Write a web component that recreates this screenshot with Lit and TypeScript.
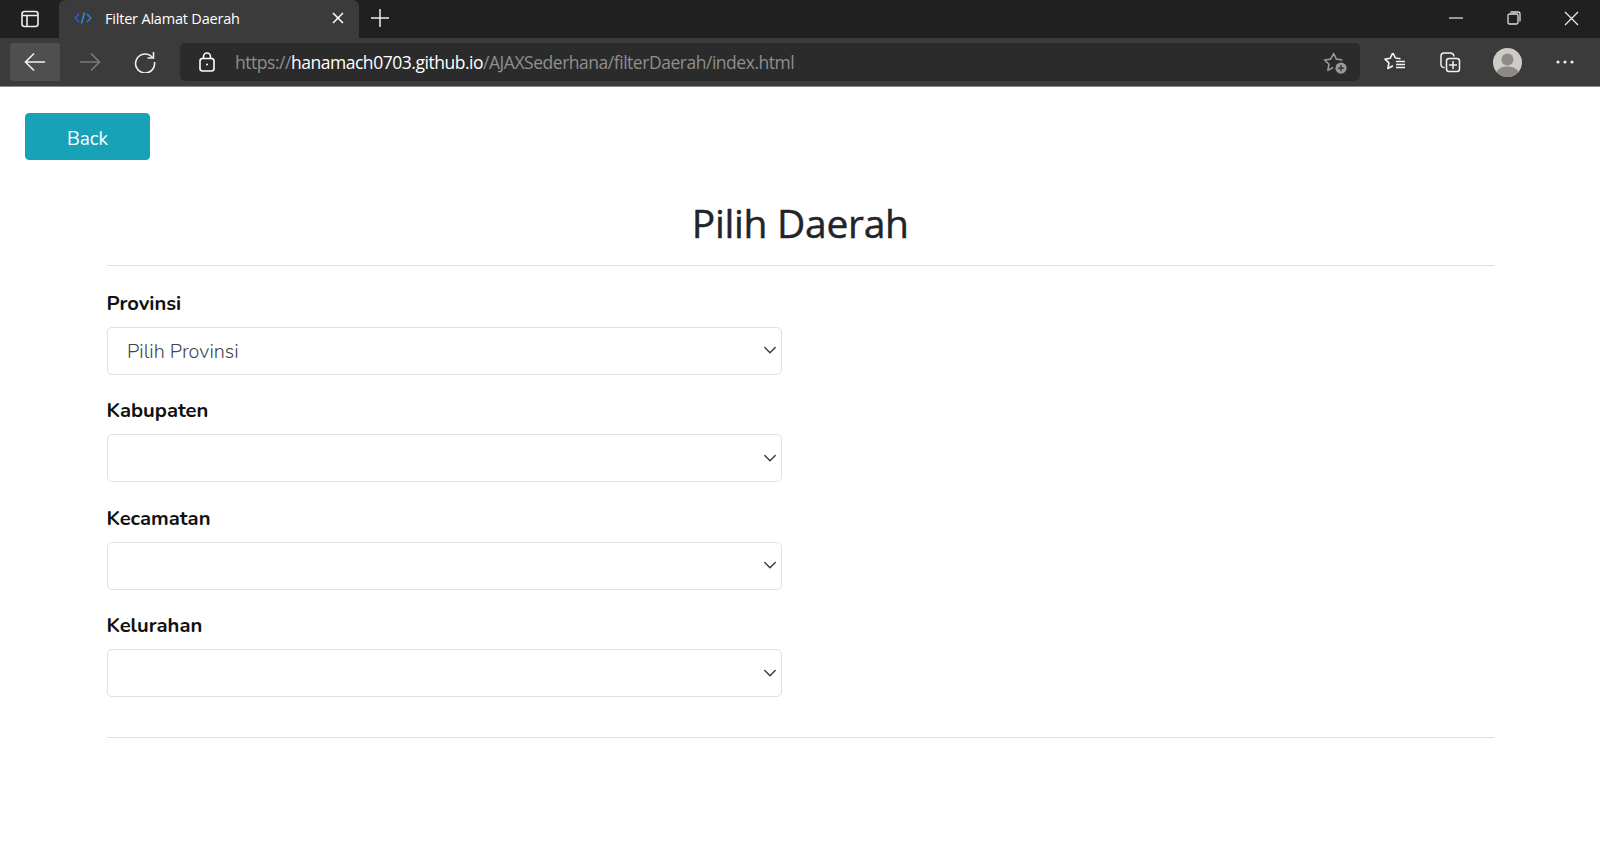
import { LitElement, html, css } from "lit";
import { customElement } from "lit/decorators.js";

const chevron = html`<svg class="chev" width="16" height="16" viewBox="0 0 16 16"><path d="M2.800 5.500 8 10.700l5.200-5.200" fill="none" stroke="#343a40" stroke-width="1.400" stroke-linecap="round" stroke-linejoin="round"/></svg>`;

@customElement("app-root")
export class AppRoot extends LitElement {
  static styles = css`
    :host { display: block; height: 847px; background: #fff; overflow: hidden; font-family: "Open Sans", "Noto Sans", sans-serif; }
    svg { display: block; flex: none; }
    .tabstrip { height: 38px; background: #202020; display: flex; align-items: stretch; }
    .side { width: 59px; display: flex; align-items: center; justify-content: center; padding-bottom: 1px; box-sizing: border-box; }
    .tab { width: 300px; background: #3b3b3b; border-radius: 6px 6px 0 0; display: flex; align-items: center; padding: 0 14px 2px 15px; box-sizing: border-box; color: #fff; }
    .tab .title { margin-left: 13px; flex: 1; font-size: 14.500px; letter-spacing: -0.2px; }
    .newtab { width: 42px; display: flex; align-items: center; justify-content: center; padding-bottom: 2px; box-sizing: border-box; }
    .spacer { flex: 1; }
    .win { width: 57.500px; display: flex; align-items: center; justify-content: center; padding-bottom: 2px; box-sizing: border-box; }
    .toolbar { height: 48px; background: #3b3b3b; display: flex; align-items: center; padding: 0 0 0 10px; border-bottom: 1px solid #8a8a8a; }
    .navbtn { width: 50px; height: 38px; border-radius: 3px; display: flex; align-items: center; justify-content: center; }
    .navbtn.hover { background: #4f4f4f; }
    .nav2 { margin-left: 6px; width: 48px; }
    .nav3 { width: 48px; margin-right: 11px; margin-left: 7px; }
    .address { width: 1180px; height: 38px; border-radius: 5px; background: #2b2b2b; display: flex; align-items: center; padding: 0 10px 0 19px; box-sizing: border-box; }
    .url { margin-left: 20px; flex: 1; font-size: 17.500px; letter-spacing: -0.470px; color: #8f8f8f; white-space: nowrap; }
    .url b { font-weight: 400; color: #fff; }
    .tools { display: flex; align-items: center; margin-left: 7px; }
    .tool { width: 56px; display: flex; align-items: center; justify-content: center; }
    .tool.more { margin-left: 2px; }
    .page { color: #212529; }
    .back { display: block; margin: 26px 0 0 25px; width: 125px; height: 47px; border: 1px solid #17a2b8; border-radius: 4px; background: #17a2b8; color: #fff; font: 400 19px "Nunito", "Open Sans", sans-serif; padding: 4px 0 0; box-sizing: border-box; }
    .container { margin: 0 106px 0 106.500px; }
    h1 { margin: 37px 0 0; height: 68px; text-align: center; font: 400 39px/52px "Open Sans", "Noto Sans", sans-serif; letter-spacing: -0.300px; -webkit-text-stroke: 0.450px #212529; color: #212529; }
    hr { margin: 0; border: 0; border-top: 1px solid #dfdfdf; height: 1px; box-sizing: border-box; }
    .field { width: 675.500px; height: 107.500px; display: flex; flex-direction: column; justify-content: flex-end; }
    .field:first-of-type { height: 108.500px; }
    label { font: 700 20.200px/24px "Nunito", "Open Sans", sans-serif; color: #111; margin-bottom: 11px; }
    .wrap { position: relative; height: 48px; }
    select { appearance: none; -webkit-appearance: none; display: block; width: 100%; height: 48px; border: 1.500px solid #e0e1e6; border-radius: 5px; background: #fff; padding: 2px 19.500px 0; font: 300 19.800px "Nunito", "Open Sans", sans-serif; color: #3f474e; outline: 0; }
    .chev { position: absolute; right: 4px; top: 15.500px; }
    .end { margin-top: 40px; }
  `;

  render() {
    return html`
      <div class="tabstrip">
        <div class="side">
          <svg width="20" height="20" viewBox="0 0 20 20" fill="none" stroke="#eee" stroke-width="1.600"><rect x="2" y="2.500" width="16" height="15" rx="2.500"/><path d="M2 6.500h16M7 6.500v11"/></svg>
        </div>
        <div class="tab">
          <svg width="18" height="14" viewBox="0 0 18 14" fill="none" stroke-width="1.500"><path d="M5 3 1.200 7 5 11" stroke="#2a62c9"/><path d="M10.500 1.500 7.500 12.500" stroke="#2f8fe0"/><path d="M13 3l3.800 4-3.800 4" stroke="#2a7fd6"/></svg>
          <span class="title">Filter Alamat Daerah</span>
          <svg width="14" height="14" viewBox="0 0 14 14" stroke="#fff" stroke-width="1.500"><path d="M2 2l10 10M12 2 2 12"/></svg>
        </div>
        <div class="newtab">
          <svg width="20" height="20" viewBox="0 0 20 20" stroke="#eee" stroke-width="1.500"><path d="M10 1v18M1 10h18"/></svg>
        </div>
        <div class="spacer"></div>
        <div class="win"><svg width="14" height="14" viewBox="0 0 14 14" stroke="#ddd" stroke-width="1.300"><path d="M0 7h14"/></svg></div>
        <div class="win"><svg width="14" height="14" viewBox="0 0 14 14" fill="none" stroke="#ddd" stroke-width="1.300"><rect x="1" y="3" width="10" height="10" rx="1.500"/><path d="M3.500 1H11a2 2 0 0 1 2 2v7.500"/></svg></div>
        <div class="win"><svg width="15" height="15" viewBox="0 0 15 15" stroke="#eee" stroke-width="1.200"><path d="M1 1l13 13M14 1 1 14"/></svg></div>
      </div>
      <div class="toolbar">
        <div class="navbtn hover"><svg width="22" height="20" viewBox="0 0 22 20" fill="none" stroke="#f2f2f2" stroke-width="1.600"><path d="M21 10H1.500M10 1.500 1.500 10l8.500 8.500"/></svg></div>
        <div class="navbtn nav2"><svg width="22" height="20" viewBox="0 0 22 20" fill="none" stroke="#7b7b7b" stroke-width="1.600"><path d="M1 10h19.500M12 1.500l8.500 8.500-8.500 8.500"/></svg></div>
        <div class="navbtn nav3"><svg width="22" height="22" viewBox="0 0 22 22" fill="none" stroke="#eee" stroke-width="1.600"><path d="M18.500 6.500A9.500 9.500 0 1 0 20.500 11"/><path d="M19.500 1v6h-6"/></svg></div>
        <div class="address">
          <svg width="16" height="20" viewBox="0 0 16 20" fill="none" stroke="#fff" stroke-width="1.600"><rect x="1" y="6.500" width="14" height="12.500" rx="2.500"/><path d="M4.500 6.500V4.500a3.500 3.500 0 0 1 7 0v2"/><circle cx="8" cy="12.500" r="1" fill="#fff" stroke="none"/></svg>
          <div class="url">https://<b>hanamach0703.github.io</b>/AJAXSederhana/filterDaerah/index.html</div>
          <svg width="27" height="27" viewBox="0 0 24 24" fill="none"><path d="M9 16.500 4.300 19l1-5.400L1.400 9.800l5.400-.8L9.500 4l2.400 5 5.400.8" stroke="#9a9a9a" stroke-width="1.400" stroke-linejoin="round"/><circle cx="16" cy="17" r="5" fill="#9a9a9a"/><path d="M16 14.200v5.600M13.200 17h5.600" stroke="#2b2b2b" stroke-width="1.200"/></svg>
        </div>
        <div class="tools">
          <div class="tool"><svg width="22" height="22" viewBox="0 0 22 22" fill="none" stroke="#f2f2f2" stroke-width="1.600" stroke-linejoin="round"><path d="M9 2l2.400 5 5.100.8M8.600 2 6.300 7.300 1 8.100l3.900 3.800-1 5.600 5-2.800"/><path d="M12 10.500h9M12 13.500h9M12 16.500h9" stroke-width="1.400"/></svg></div>
          <div class="tool"><svg width="24" height="24" viewBox="0 0 24 24" fill="none" stroke="#f2f2f2" stroke-width="1.500"><path d="M5.500 17.500A3 3 0 0 1 2 15V6a3 3 0 0 1 3-3h6a4 4 0 0 1 4 3.500"/><rect x="7.500" y="8.500" width="13" height="13" rx="2.500"/><path d="M14 11v8M10 15h8"/></svg></div>
          <div class="tool"><svg width="29" height="29" viewBox="0 0 29 29"><circle cx="14.500" cy="14.500" r="14.500" fill="#cfccc8"/><circle cx="14.500" cy="11.500" r="6" fill="#8e8b87"/><path d="M3.500 24c2-4 6-5.500 11-5.500s9 1.500 11 5.500a14.500 14.500 0 0 1-22 0z" fill="#8e8b87"/></svg></div>
          <div class="tool more"><svg width="18" height="4" viewBox="0 0 18 4" fill="#eee"><circle cx="2" cy="2" r="1.600"/><circle cx="9" cy="2" r="1.600"/><circle cx="16" cy="2" r="1.600"/></svg></div>
        </div>
      </div>
      <main class="page">
        <button class="back">Back</button>
        <div class="container">
          <h1>Pilih Daerah</h1>
          <hr />
          <div class="field"><label>Provinsi</label><div class="wrap"><select><option>Pilih Provinsi</option></select>${chevron}</div></div>
          <div class="field"><label>Kabupaten</label><div class="wrap"><select></select>${chevron}</div></div>
          <div class="field"><label>Kecamatan</label><div class="wrap"><select></select>${chevron}</div></div>
          <div class="field"><label>Kelurahan</label><div class="wrap"><select></select>${chevron}</div></div>
          <hr class="end" />
        </div>
      </main>
    `;
  }
}
